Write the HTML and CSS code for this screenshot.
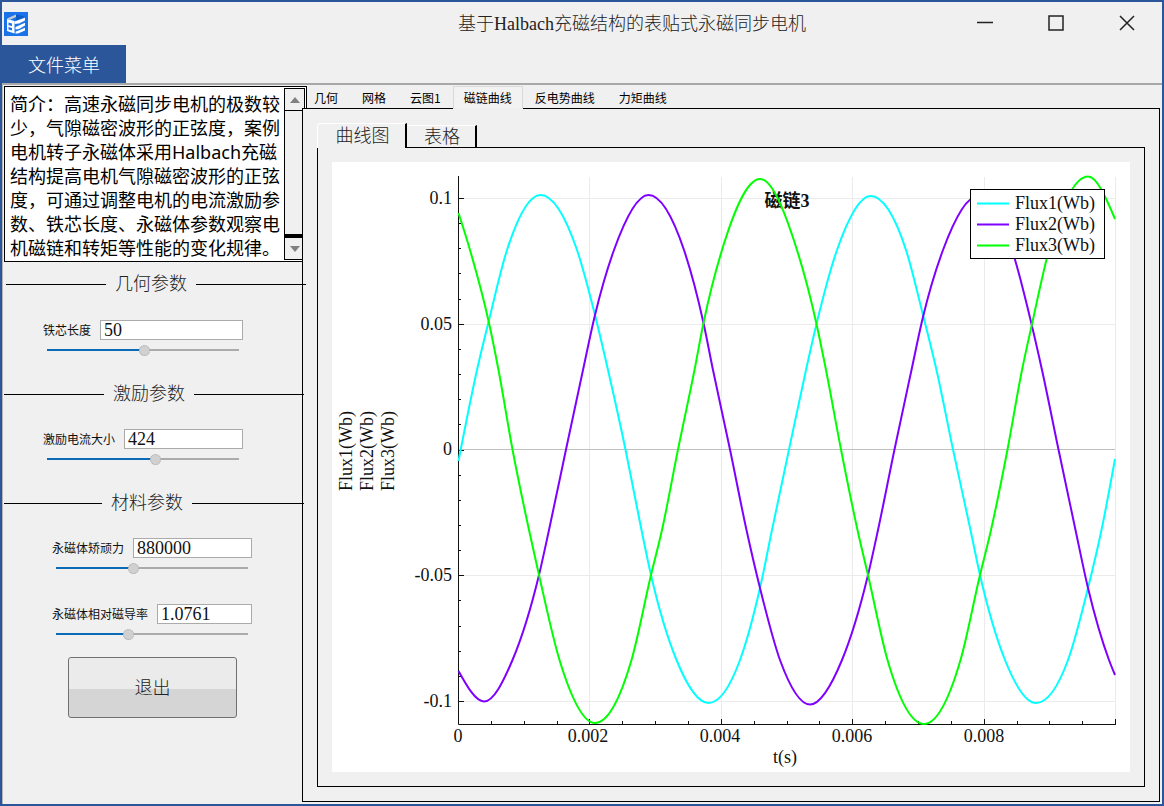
FILE: index.html
```html
<!DOCTYPE html>
<html lang="zh-CN">
<head>
<meta charset="utf-8">
<title>基于Halbach充磁结构的表贴式永磁同步电机</title>
<link rel="stylesheet" href="styles.css">
</head>
<body>
<div class="window">
  <header class="titlebar">
    <svg class="logo" viewBox="0 0 24 24" aria-hidden="true">
      <rect width="24" height="24" fill="#1a73e8"/>
      <path d="M3 6.5 12 2.500V5L6 7.8z" fill="#c9cdd2"/>
      <path d="M12 2.500 21 4.500 12 8.500V5z" fill="#0d5bc4"/>
      <path fill-rule="evenodd" d="M3 7 10.500 9V21.500L3 19zM4.500 10.500V13.200L8 14V11.400zM4.500 15V17.600L8 18.600V16z" fill="#fff"/>
      <path d="M10.500 9.500 21 5.800V8.500L15 11.500 10.500 12zM11.500 15 21 10.800V13.500L15 17 11.500 17.500zM11.500 19.800 21 15.800V18.500L14 21.500H11.500z" fill="#fff"/>
    </svg>
    <h1 class="title">基于Halbach充磁结构的表贴式永磁同步电机</h1>
    <div class="window-buttons">
      <button class="window-button" aria-label="最小化"><svg viewBox="0 0 16 16"><path d="M0 7.500H16"/></svg></button>
      <button class="window-button" aria-label="最大化"><svg viewBox="0 0 16 16"><path d="M1 1H15V15H1z"/></svg></button>
      <button class="window-button" aria-label="关闭"><svg viewBox="0 0 16 16"><path d="M1 1 15 15M15 1 1 15"/></svg></button>
    </div>
  </header>
  <nav class="menubar"><button class="menu-button">文件菜单</button></nav>

  <main class="workspace">
    <aside class="sidebar">
      <div class="intro">
        <textarea class="intro-text" aria-label="简介" readonly>简介：高速永磁同步电机的极数较少，气隙磁密波形的正弦度，案例电机转子永磁体采用Halbach充磁结构提高电机气隙磁密波形的正弦度，可通过调整电机的电流激励参数、铁芯长度、永磁体参数观察电机磁链和转矩等性能的变化规律。</textarea>
        <div class="scrollbar">
          <button class="scroll-button" aria-label="向上滚动"><svg viewBox="0 0 10 6"><path d="M0 6 5 0 10 6z"/></svg></button>
          <div class="scroll-track"></div>
          <button class="scroll-button" aria-label="向下滚动"><svg viewBox="0 0 10 6"><path d="M0 0 5 6 10 0z"/></svg></button>
        </div>
      </div>

      <h2 class="group-title group-title-first">几何参数</h2>
      <div class="field">
        <div class="field-row"><label for="core">铁芯长度</label><input class="value" id="core" type="text" value="50"></div>
        <input class="slider" type="range" aria-label="铁芯长度" min="0" max="100" step="any" value="51" style="--fill:51%">
      </div>

      <h2 class="group-title">激励参数</h2>
      <div class="field">
        <div class="field-row"><label for="current">激励电流大小</label><input class="value" id="current" type="text" value="424"></div>
        <input class="slider" type="range" aria-label="激励电流大小" min="0" max="100" step="any" value="57" style="--fill:57%">
      </div>

      <h2 class="group-title group-title-material">材料参数</h2>
      <div class="field field-material">
        <div class="field-row"><label for="coercivity">永磁体矫顽力</label><input class="value" id="coercivity" type="text" value="880000"></div>
        <input class="slider" type="range" aria-label="永磁体矫顽力" min="0" max="100" step="any" value="40" style="--fill:40%">
      </div>
      <div class="field field-material field-next">
        <div class="field-row"><label for="permeability">永磁体相对磁导率</label><input class="value" id="permeability" type="text" value="1.0761"></div>
        <input class="slider" type="range" aria-label="永磁体相对磁导率" min="0" max="100" step="any" value="37" style="--fill:37%">
      </div>
      <button class="exit-button">退出</button>
    </aside>

    <section class="results">
      <div class="tabs" role="tablist">
        <button class="tab" role="tab">几何</button>
        <button class="tab" role="tab">网格</button>
        <button class="tab" role="tab">云图1</button>
        <button class="tab tab-active" role="tab" aria-selected="true">磁链曲线</button>
        <button class="tab" role="tab">反电势曲线</button>
        <button class="tab" role="tab">力矩曲线</button>
      </div>
      <div class="tab-panel">
        <div class="subtabs" role="tablist">
          <button class="subtab subtab-active" role="tab" aria-selected="true">曲线图</button>
          <button class="subtab" role="tab">表格</button>
          <div class="subtab-rule"></div>
        </div>
        <div class="chart-frame">
          <svg class="chart" viewBox="332 162 798 610" role="img" aria-label="磁链曲线">
            <g class="grid">
              <path d="M589.5 177V724M721.5 177V724M852.5 177V724M984.5 177V724M1115.5 177V724M458 198.5H1115M458 324.5H1115M458 575.5H1115M458 701.5H1115"/>
              <path class="zero" d="M458 449.5H1115"/>
            </g>
            <text class="chart-title" x="787" y="207">磁链3</text>
            <path class="axis" id="axes"/>
            <g class="curves">
              <path id="flux1" stroke="#00ffff"/>
              <path id="flux2" stroke="#7f00ff"/>
              <path id="flux3" stroke="#00ff00"/>
            </g>
            <g class="tick-end">
              <text x="452" y="204">0.1</text>
              <text x="452" y="330">0.05</text>
              <text x="452" y="455">0</text>
              <text x="452" y="581">-0.05</text>
              <text x="452" y="707">-0.1</text>
            </g>
            <g class="tick-mid">
              <text x="458" y="742">0</text>
              <text x="588" y="742">0.002</text>
              <text x="720" y="742">0.004</text>
              <text x="852" y="742">0.006</text>
              <text x="984" y="742">0.008</text>
              <text x="785" y="763">t(s)</text>
              <text transform="translate(352 451) rotate(-90)">Flux1(Wb)</text>
              <text transform="translate(373 451) rotate(-90)">Flux2(Wb)</text>
              <text transform="translate(394 451) rotate(-90)">Flux3(Wb)</text>
            </g>
            <g class="legend">
              <rect x="970.5" y="189.5" width="134" height="69"/>
              <path d="M977 203.5H1009" stroke="#00ffff"/>
              <path d="M977 224.5H1009" stroke="#7f00ff"/>
              <path d="M977 245.5H1009" stroke="#00ff00"/>
              <text x="1015" y="209">Flux1(Wb)</text>
              <text x="1015" y="230">Flux2(Wb)</text>
              <text x="1015" y="251">Flux3(Wb)</text>
            </g>
          </svg>
        </div>
      </div>
    </section>
  </main>
</div>
<script src="chart.js"></script>
</body>
</html>
```
FILE: styles.css
```css
* { box-sizing: border-box; }

body {
  margin: 0;
  font-family: "Liberation Serif", "Noto Sans CJK SC", serif;
  font-weight: 300;
  font-size: 18px;
  color: #111;
}

button, input, textarea { font: inherit; color: inherit; }
button { padding: 0; border: 0; background: none; }

.window {
  display: flex;
  flex-direction: column;
  min-height: 100vh;
  border: 2px solid #2b579a;
  background: #f0f0f0;
}

.titlebar {
  display: grid;
  grid-template-columns: 27% 1fr auto;
  align-items: center;
  height: 43px;
}
.logo { width: 24px; height: 24px; margin-left: 2px; }
.title { margin: 0; font-size: 18px; font-weight: 300; line-height: 24px; text-align: center; color: #222; }
.window-buttons { display: flex; align-self: start; }
.window-button { display: grid; place-items: center; width: 71px; height: 42px; }
.window-button svg { width: 16px; height: 16px; fill: none; stroke: #222; stroke-width: 1.5; }

.menubar { height: 38px; }
.menu-button {
  width: 124px;
  height: 38px;
  background: #2b579a;
  color: #fff;
  font-family: "Noto Sans CJK SC", sans-serif;
}

.workspace {
  display: grid;
  grid-template-columns: 299px 1fr;
  flex: 1;
  padding: 1px 2px 2px 0;
  border-top: 2px solid #a8a8a8;
  border-left: 1px solid #b4b4b4;
}

.sidebar { padding-left: 1px; }
.intro {
  display: flex;
  width: 303px;
  height: 176px;
  border: 1px solid #000;
  background: #fff;
}
.intro-text {
  flex: 1;
  padding: 5px 0 0 5px;
  border: 0;
  outline: 0;
  resize: none;
  overflow: hidden;
  background: #fff;
  color: #000;
  font-family: "Noto Sans", "Noto Sans CJK SC", sans-serif;
  font-weight: 400;
  line-height: 24px;
}
.scrollbar {
  display: flex;
  flex-direction: column;
  width: 21px;
  margin: 1px;
  border: 1px solid #000;
  background: #f0f0f0;
}
.scroll-button { height: 21px; line-height: 0; }
.scroll-button svg { width: 10px; height: 6px; fill: #808080; }
.scroll-track { flex: 1; border-top: 1px solid #000; border-bottom: 4px solid #000; }

.group-title {
  position: relative;
  z-index: 1;
  display: flex;
  align-items: center;
  width: 300px;
  height: 24px;
  margin: 26px 0 23px;
  font-size: 18px;
  font-weight: 300;
  line-height: 20px;
  color: #222;
}
.group-title::before, .group-title::after { content: ""; height: 1px; background: #000; }
.group-title::before { width: 100px; margin-right: 9px; }
.group-title::after { flex: 1; margin-left: 9px; }
.group-title-first { margin: 10px 0 24px 2px; }
.group-title-material::before { width: 98px; }

.field { width: 200px; margin-left: 39px; }
.field-material { margin-left: 48px; }
.field-next { margin-top: 30px; }
.field-row { display: flex; align-items: center; gap: 9px; }
.field-row label {
  font-family: "Noto Sans CJK SC", sans-serif;
  font-size: 12px;
  font-weight: 400;
  line-height: 20px;
  white-space: nowrap;
}
.value {
  flex: 1;
  min-width: 0;
  height: 20px;
  padding: 1px 3px 0;
  border: 1px solid #ababab;
  background: #fff;
  line-height: 18px;
}

.slider {
  display: block;
  appearance: none;
  width: 192px;
  height: 12px;
  margin: 4px;
  background: linear-gradient(to right, #0a6ab6 var(--fill), #ababab var(--fill)) center / 100% 2px no-repeat;
}
.slider::-webkit-slider-thumb {
  appearance: none;
  width: 11px;
  height: 11px;
  border: 1px dotted #aaa;
  border-radius: 50%;
  background: #d0d0d0;
}

.exit-button {
  display: block;
  width: 169px;
  height: 61px;
  margin: 17px 0 0 64px;
  padding-bottom: 4px;
  border: 1px solid #707070;
  border-radius: 3px;
  background: linear-gradient(#ebebeb 52%, #d5d5d5 52%);
  color: #222;
}

.results { display: flex; flex-direction: column; min-width: 0; }
.tabs { display: flex; height: 22px; }
.tab {
  padding: 1px 12px 0;
  font-family: "Noto Sans CJK SC", sans-serif;
  font-size: 12px;
  font-weight: 400;
  color: #000;
}
.tab-active {
  position: relative;
  height: 23px;
  padding: 0 10px;
  border: 1px solid #d9d9d9;
  border-bottom-color: #f0f0f0;
  background: #f2f2f2;
}
.tab-panel {
  display: flex;
  flex: 1;
  flex-direction: column;
  padding: 14px;
  border: 1px solid #000;
  background: #f0f0f0;
}

.subtabs { display: flex; align-items: flex-end; height: 25px; }
.subtab {
  width: 70px;
  height: 23px;
  padding-left: 2px;
  border-top: 1px solid #fff;
  border-right: 2px solid #000;
  border-bottom: 1px solid #000;
  line-height: 20px;
  color: #222;
}
.subtab-active {
  width: 90px;
  height: 25px;
  border-left: 1px solid #fff;
  border-bottom: 0;
  border-top-left-radius: 4px;
}
.subtab-rule { flex: 1; border-bottom: 1px solid #000; }

.chart-frame {
  display: flex;
  flex: 1;
  padding: 14px;
  border: 1px solid #000;
  border-top: 0;
}
.chart { flex: 1; min-width: 0; width: 100%; background: #fff; fill: #111; }

.grid path { fill: none; stroke: #ebebeb; }
.grid .zero { stroke: #c0c0c0; }
.axis { fill: none; stroke: #111; }
.curves path { fill: none; stroke-width: 2; stroke-linejoin: round; }
.chart-title { font-weight: 700; text-anchor: middle; }
.tick-end { text-anchor: end; }
.tick-mid { text-anchor: middle; }
.legend rect { fill: #fff; stroke: #000; }
.legend path { stroke-width: 2; }
```
FILE: chart.js
```js
const series = {
  flux1: [[458.5,461],[477,370],[489,320],[507,250],[540.5,195],[577,250],[595,315],[608,370],[625.5,449.5],[641.5,530],[651,575],[676.5,660],[708.5,703],[740,660],[760,588],[772,530],[789,449.5],[806,370],[816.5,324],[837,250],[870.5,196],[906,250],[923,315],[936.5,370],[953,449.5],[970.5,530],[980,575],[1005,660],[1036,703],[1068,660],[1088,588],[1101.5,530],[1115,459]],
  flux2: [[458.5,671],[484,701.5],[512.5,660],[539,575],[549,530],[566,449.5],[583,370],[595,315],[614,250],[648.5,195],[684,250],[703.5,323],[713,370],[730,449.5],[746.5,530],[760,588],[780,660],[810,704.5],[842,660],[868,575],[878,530],[894.5,449.5],[911.5,370],[922.5,319],[943,250],[978,196],[1012,250],[1031.5,324],[1042,370],[1058.5,449.5],[1075.5,530],[1088,588],[1109,660],[1115,675]],
  flux3: [[458.5,213],[470,250],[489,323],[498.5,370],[512.5,449.5],[529,530],[539,575],[559.5,660],[595,723],[631.5,660],[651,575],[662,530],[678,449.5],[694.5,370],[703.5,323],[722,250],[760,179],[797,250],[816.5,324],[826,370],[841,449.5],[857.5,530],[868,575],[887.5,660],[924,724],[960.5,660],[980,575],[991,530],[1007.5,449.5],[1022,370],[1032,324],[1049,250],[1088,176.5],[1115,219]]
};

const chord = (a, b) => (b[1] - a[1]) / (b[0] - a[0]);

// Slope of the parabola through a point and its two neighbours, flat at extremes.
function slopeAt(p, i) {
  const last = p.length - 1;
  if (i === 0) return (3 * chord(p[0], p[1]) - slopeAt(p, 1)) / 2;
  if (i === last) return (3 * chord(p[last - 1], p[last]) - slopeAt(p, last - 1)) / 2;
  const before = chord(p[i - 1], p[i]);
  const after = chord(p[i], p[i + 1]);
  if (before * after <= 0) return 0;
  const h0 = p[i][0] - p[i - 1][0];
  const h1 = p[i + 1][0] - p[i][0];
  return (before * h1 + after * h0) / (h0 + h1);
}

function curve(p) {
  let d = `M${p[0]}`;
  for (let i = 1; i < p.length; i++) {
    const h = (p[i][0] - p[i - 1][0]) / 3;
    const c1 = [p[i - 1][0] + h, p[i - 1][1] + h * slopeAt(p, i - 1)];
    const c2 = [p[i][0] - h, p[i][1] - h * slopeAt(p, i)];
    d += `C${c1} ${c2} ${p[i]}`;
  }
  return d;
}

for (const id in series) {
  document.getElementById(id).setAttribute("d", curve(series[id]));
}

let axes = "M458.5 176V724.5H1116";
for (let i = 1; i <= 20; i++) {
  const x = Math.round(458 + i * 32.86) + 0.5;
  axes += `M${x} 724V${i % 4 ? 721 : 719}`;
}
for (let i = 0; i <= 20; i++) {
  const y = Math.round(198 + i * 25.15) + 0.5;
  axes += `M458 ${y}H${i % 5 ? 461 : 464}`;
}
document.getElementById("axes").setAttribute("d", axes);
```
